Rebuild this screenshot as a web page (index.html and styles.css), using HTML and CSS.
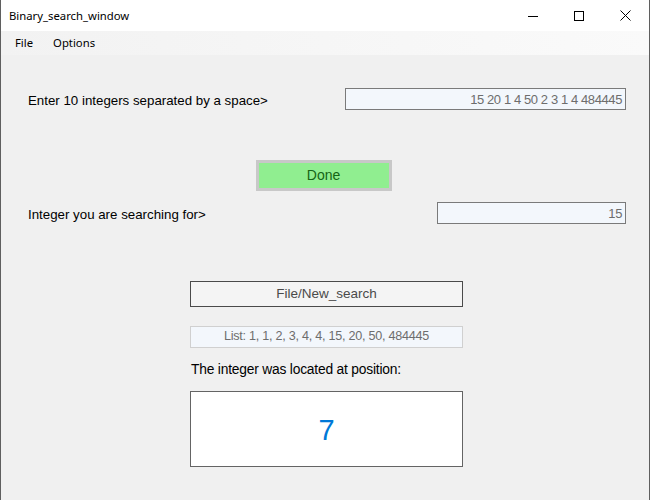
FILE: index.html
```html
<!DOCTYPE html>
<html>
<head>
<meta charset="utf-8">
<link rel="stylesheet" href="styles.css">
</head>
<body>
<div class="window">
  <div class="titlebar">
    <span class="title">Binary_search_window</span>
    <div class="controls">
      <span class="ctl"><svg width="10" height="10" viewBox="0 0 10 10"><path d="M0 5.5H10" stroke="#000" stroke-width="1"/></svg></span>
      <span class="ctl"><svg width="10" height="10" viewBox="0 0 10 10"><rect x="0.5" y="0.5" width="9" height="9" fill="none" stroke="#000" stroke-width="1"/></svg></span>
      <span class="ctl"><svg width="11" height="11" viewBox="0 0 11 11"><path d="M0.5 0.5L10.5 10.5M10.5 0.5L0.5 10.5" stroke="#000" stroke-width="1"/></svg></span>
    </div>
  </div>
  <div class="menubar">
    <span class="menu-item file">File</span>
    <span class="menu-item">Options</span>
  </div>
  <div class="content">
    <div class="row row-first">
      <span class="label">Enter 10 integers separated by a space&gt;</span>
      <div class="textbox wide">15 20 1 4 50 2 3 1 4 484445</div>
    </div>
    <div class="done-wrap">
      <div class="done">Done</div>
    </div>
    <div class="row row-second">
      <span class="label">Integer you are searching for&gt;</span>
      <div class="textbox narrow">15</div>
    </div>
    <div class="column">
      <div class="newsearch">File/New_search</div>
      <div class="listbox">List: 1, 1, 2, 3, 4, 4, 15, 20, 50, 484445</div>
      <div class="result-label">The integer was located at position:</div>
      <div class="result">7</div>
    </div>
  </div>
</div>
</body>
</html>
```
FILE: styles.css
```css
* { box-sizing: border-box; }
html, body { margin: 0; padding: 0; }
body { width: 650px; height: 500px; overflow: hidden; background: #f0f0f0; }
.window {
  width: 650px; height: 500px;
  border-left: 1px solid #5f5f5f;
  border-right: 1px solid #5f5f5f;
  background: #f0f0f0;
  display: flex; flex-direction: column;
}
.titlebar {
  height: 31px; background: #ffffff;
  display: flex; align-items: center; justify-content: space-between;
  font-family: "Noto Sans", "Open Sans", sans-serif; font-size: 11.3px; color: #000;
}
.title { padding-left: 8px; padding-bottom: 1px; }
.controls { display: flex; height: 31px; margin-right: 1px; }
.ctl { width: 46px; height: 31px; display: flex; align-items: center; justify-content: center; }
.menubar {
  height: 24px;
  background: linear-gradient(to right, #f2f2f2, #fafafa);
  display: flex; align-items: center; padding-left: 14px;
  font-family: "Noto Sans", "Open Sans", sans-serif; font-size: 11.3px; color: #000;
}
.menu-item { padding-bottom: 1px; }
.file { margin-right: 20px; }
.content {
  flex: 1;
  font-family: "Liberation Sans", Arial, sans-serif; font-size: 13px; color: #000;
}
.row { display: flex; align-items: center; justify-content: space-between; padding: 0 23px 0 27px; height: 22px; }
.row-first { margin-top: 33px; }
.row-second { margin-top: 11px; }
.label { font-size: 13.3px; padding-top: 2px; }
.textbox {
  height: 22px; border: 1px solid #7a7a7a; background: #f3f7fc;
  color: #6d6d6d; text-align: right; padding: 2px 3px 0 0; line-height: 17px;
  letter-spacing: -0.4px;
}
.wide { width: 281px; }
.narrow { width: 189px; }
.done-wrap { display: flex; justify-content: center; margin-top: 50px; padding-right: 3px; }
.done {
  width: 136px; height: 31px; border: 3px solid #c8c8c8; background: #90ee90;
  color: #156515; font-size: 14px; text-align: center; line-height: 24px;
}
.column { margin: 57px 0 0 189px; width: 273px; display: flex; flex-direction: column; }
.newsearch {
  height: 26px; border: 1px solid #4a4a4a; background: #f4f4f4;
  color: #4a4a4a; font-size: 13.5px; text-align: center; line-height: 23px;
}
.listbox {
  margin-top: 19px; height: 22px; border: 1px solid #d0d0d0; background: #f3f7fc;
  color: #6d6d6d; text-align: center; line-height: 19px; font-size: 12.6px; letter-spacing: -0.25px;
}
.result-label { margin-top: 14px; padding-left: 1px; font-size: 13.8px; line-height: 16px; height: 16px; letter-spacing: -0.2px; }
.result {
  margin-top: 13px; height: 76px; border: 1px solid #646464; background: #ffffff;
  color: #0078d7; font-size: 29px; text-align: center; line-height: 76px;
}
```
